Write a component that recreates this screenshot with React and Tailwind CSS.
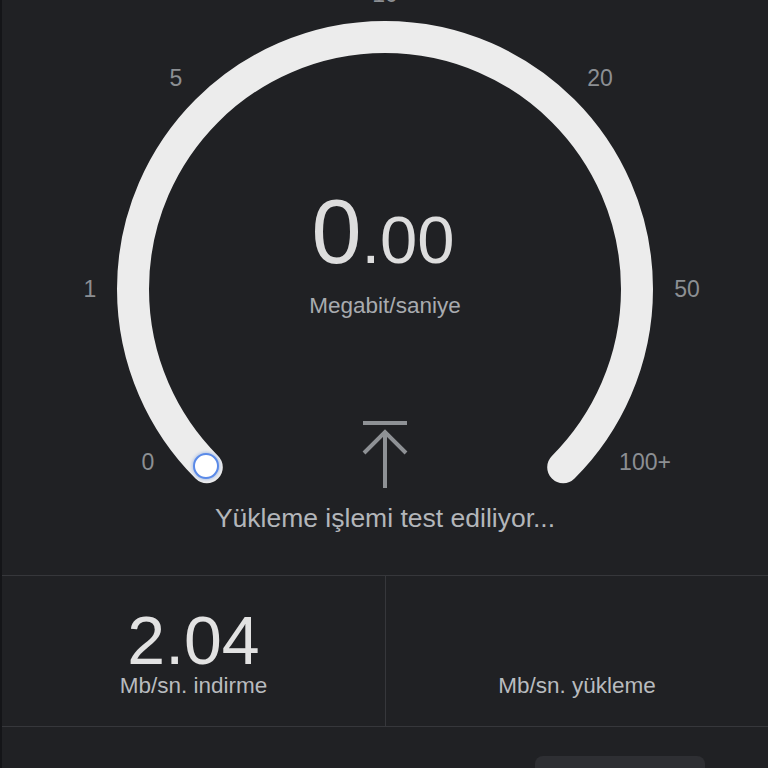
import React from "react";

const labels = [
  { t: "0", x: 148, y: 470 },
  { t: "1", x: 90, y: 297 },
  { t: "5", x: 176, y: 86 },
  { t: "10", x: 385, y: 2 },
  { t: "20", x: 600, y: 86 },
  { t: "50", x: 687, y: 297 },
  { t: "100+", x: 645, y: 470 },
];

function Gauge() {
  return (
    <svg
      className="absolute inset-0"
      width="766"
      height="575"
      viewBox="2 0 766 575"
    >
      <defs>
        <filter id="glow" x="-1" y="-1" width="3" height="3">
          <feGaussianBlur stdDeviation="1.5" />
        </filter>
      </defs>
      <path
        d="M 206.8 467.2 A 252 252 0 1 1 563.2 467.2"
        fill="none"
        stroke="#ececec"
        strokeWidth="32"
        strokeLinecap="round"
      />
      {labels.map((l) => (
        <text
          key={l.t}
          x={l.x}
          y={l.y}
          textAnchor="middle"
          fontSize="23"
          fill="#8c8f93"
          fontFamily="'Liberation Sans', Arial, sans-serif"
        >
          {l.t}
        </text>
      ))}
      <circle cx="206" cy="466" r="14" fill="#4a7fe0" opacity="0.35" filter="url(#glow)" />
      <circle cx="206" cy="466" r="12" fill="#ffffff" stroke="#5a8ae8" strokeWidth="2" />
    </svg>
  );
}

function UploadIcon() {
  return (
    <svg width="48" height="70" viewBox="0 0 48 70" fill="none" stroke="#8e9195" strokeWidth="4">
      <line x1="2" y1="3" x2="46" y2="3" />
      <line x1="24" y1="11" x2="24" y2="68" />
      <polyline points="3,33 24,12 45,33" />
    </svg>
  );
}

export default function App() {
  return (
    <div className="h-[768px] w-full overflow-hidden border-l-2 border-[#141518] bg-[#202124] font-['Liberation_Sans',Arial,sans-serif]">
      <section className="relative h-[576px] border-b border-[#36373b]">
        <Gauge />
        <div className="relative flex flex-col items-center pt-[187px]">
          <div className="-translate-x-[2px] leading-none text-[#dddddd]">
            <span className="text-[90px]">0</span>
            <span className="text-[67px]">.00</span>
          </div>
          <p className="mt-[18px] text-[22.5px] leading-none text-[#a8abaf]">
            Megabit/saniye
          </p>
          <div className="mt-[102px]">
            <UploadIcon />
          </div>
          <p className="mt-[15px] text-[26.5px] leading-none text-[#b3b6ba]">
            Yükleme işlemi test ediliyor...
          </p>
        </div>
      </section>

      <div className="grid h-[151px] grid-cols-[383px_1fr] border-b border-[#36373b]">
        <div className="flex flex-col items-center justify-end pb-[29px]">
          <span className="text-[68px] leading-[60px] text-[#e2e2e2]">2.04</span>
          <span className="mt-[5px] text-[22.5px] leading-none text-[#b8bbbf]">
            Mb/sn. indirme
          </span>
        </div>
        <div className="flex flex-col items-center justify-end border-l border-[#36373b] pb-[29px]">
          <span className="text-[22.5px] leading-none text-[#b8bbbf]">
            Mb/sn. yükleme
          </span>
        </div>
      </div>

      <div className="flex justify-end pr-[63px] pt-[29px]">
        <div className="h-12 w-[170px] rounded-lg bg-[#2e2f33]" />
      </div>
    </div>
  );
}
